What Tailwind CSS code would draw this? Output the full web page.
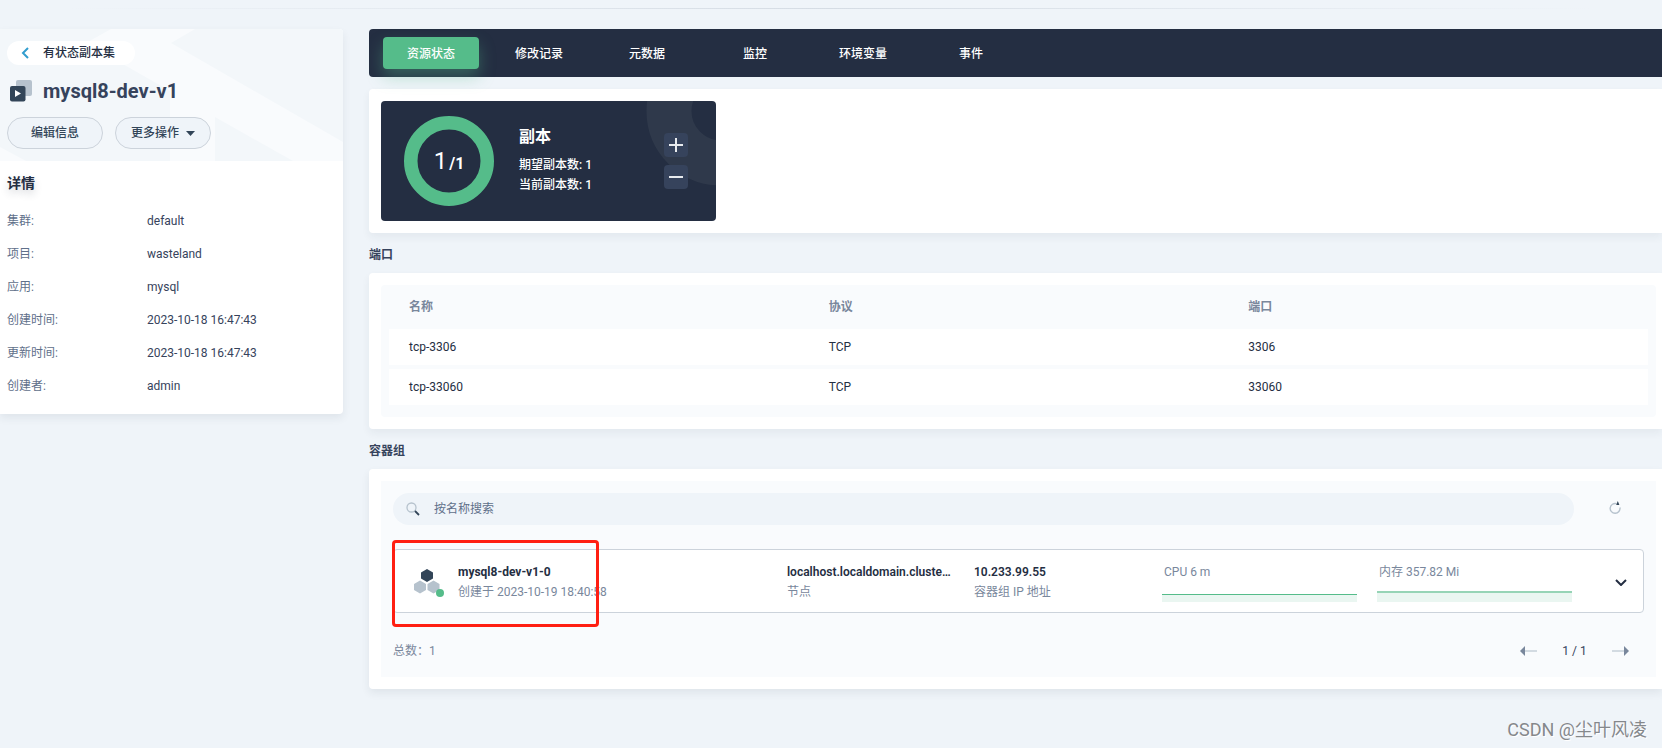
<!DOCTYPE html>
<html lang="zh-CN">
<head>
<meta charset="utf-8">
<meta name="viewport" content="width=device-width, initial-scale=1">
<title>mysql8-dev-v1</title>
<script src="https://cdn.jsdelivr.net/npm/@tailwindcss/browser@4"></script>
</head>
<body class="relative min-h-screen overflow-x-hidden bg-[#eff4f9] font-[Roboto,'Noto_Sans_CJK_SC',sans-serif] text-xs leading-5 text-[#36435c]">
  <div class="absolute inset-x-0 top-2 mx-auto h-px w-11/12 bg-linear-to-r from-transparent via-[#d5dce4] to-transparent"></div>

  <div class="flex items-start pt-[29px]">
    <!-- Sidebar -->
    <aside class="mr-[26px] w-[343px] shrink-0 overflow-hidden rounded-r bg-white shadow-[0_4px_8px_rgba(36,46,66,0.08)]">
      <header class="relative bg-[#f9fbfd] px-[7px] pt-3 pb-3">
        <svg class="absolute inset-0 h-full w-full" viewBox="0 0 343 132" preserveAspectRatio="none" fill="#f3f7fa" aria-hidden="true">
          <path d="M195 0 171 14 343 113V0Z"/>
          <path d="M0 0H111L86 14 170 62V132H26L0 118Z"/>
          <path d="M215 88 293 132H215Z"/>
        </svg>
        <div class="relative">
          <a href="#" class="flex h-6 w-32 items-center rounded-full bg-white pl-3 font-medium text-[#242e42]">
            <svg class="mr-2 size-4" viewBox="0 0 16 16" fill="none" stroke="#329dce" stroke-width="2" aria-hidden="true"><path d="M9 3 4 8l5 5"/></svg>
            有状态副本集
          </a>
          <h1 class="mt-3 flex h-7 items-center pl-[3px] text-xl font-bold">
            <svg class="mr-[11px] size-[22px]" viewBox="0 0 22 22" aria-hidden="true">
              <rect x="6" y="0" width="16" height="16" rx="2" fill="#b6c2cd"/>
              <rect x="0" y="6" width="15.500" height="15.500" rx="2" fill="#324558"/>
              <path d="M5 10v7l6-3.500z" fill="#fff"/>
            </svg>
            <span class="leading-7">mysql8-dev-v1</span>
          </h1>
          <div class="mt-3 flex gap-3">
            <button type="button" class="h-8 w-24 rounded-full border border-[#ccd3db] bg-[#eff4f9] font-medium text-[#324558]">编辑信息</button>
            <button type="button" class="flex h-8 w-24 items-center justify-center gap-[7px] rounded-full border border-[#ccd3db] bg-[#eff4f9] font-medium text-[#324558]">更多操作
              <svg class="h-[5px] w-[9px]" viewBox="0 0 9 5" fill="#324558" aria-hidden="true"><path d="M0 0h9L4.500 5z"/></svg>
            </button>
          </div>
        </div>
      </header>
      <section class="px-[7px] pt-3 pb-3">
        <h2 class="text-sm font-semibold text-[#242e42] text-shadow-[0_4px_8px_rgba(36,46,66,0.2)]">详情</h2>
        <dl class="mt-[11px] grid grid-cols-[140px_1fr] auto-rows-[33px] items-center">
          <dt class="text-[#5f708a]">集群:</dt><dd>default</dd>
          <dt class="text-[#5f708a]">项目:</dt><dd>wasteland</dd>
          <dt class="text-[#5f708a]">应用:</dt><dd>mysql</dd>
          <dt class="text-[#5f708a]">创建时间:</dt><dd>2023-10-18 16:47:43</dd>
          <dt class="text-[#5f708a]">更新时间:</dt><dd>2023-10-18 16:47:43</dd>
          <dt class="text-[#5f708a]">创建者:</dt><dd>admin</dd>
        </dl>
      </section>
    </aside>

    <!-- Main column -->
    <main class="min-w-0 flex-1">
      <nav class="flex h-12 items-center gap-3 rounded-l bg-[#242e42] pl-[14px] font-medium text-white">
        <a href="#" class="flex h-8 w-24 items-center justify-center rounded bg-[#55bc8a] pt-[2px] shadow-[0_8px_16px_rgba(85,188,138,0.36)]">资源状态</a>
        <a href="#" class="flex h-8 w-24 items-center justify-center pt-[2px]">修改记录</a>
        <a href="#" class="flex h-8 w-24 items-center justify-center pt-[2px]">元数据</a>
        <a href="#" class="flex h-8 w-24 items-center justify-center pt-[2px]">监控</a>
        <a href="#" class="flex h-8 w-24 items-center justify-center pt-[2px]">环境变量</a>
        <a href="#" class="flex h-8 w-24 items-center justify-center pt-[2px]">事件</a>
      </nav>

      <!-- Replicas -->
      <section class="mt-3 rounded-l bg-white p-3 pr-[6px] shadow-[0_4px_8px_rgba(36,46,66,0.06)]">
        <div class="relative flex h-[120px] w-[335px] items-center overflow-hidden rounded bg-[#242e42] pr-7 pl-[23px] text-white">
          <svg class="absolute top-0 right-0 h-[90px] w-[72px]" viewBox="0 0 72 90" aria-hidden="true">
            <circle cx="77" cy="10" r="52" fill="none" stroke="#2f394b" stroke-width="45"/>
          </svg>
          <div class="relative flex size-[90px] items-center justify-center">
            <svg class="absolute inset-0 size-full" viewBox="0 0 90 90" fill="none" aria-hidden="true"><circle cx="45" cy="45" r="38.250" stroke="#55bc8a" stroke-width="13.500"/></svg>
            <p class="relative flex items-baseline gap-[2px] leading-8"><span class="text-2xl">1</span><span class="text-base font-bold">/1</span></p>
          </div>
          <div class="relative ml-[25px] flex-1 pb-[5px]">
            <h3 class="mb-1 text-base leading-7 font-semibold">副本</h3>
            <p class="font-medium">期望副本数: 1</p>
            <p class="font-medium">当前副本数: 1</p>
          </div>
          <div class="relative flex flex-col gap-2">
            <button type="button" aria-label="增加副本" class="flex size-6 items-center justify-center rounded bg-[#36435c]">
              <svg class="size-[14px]" viewBox="0 0 14 14" stroke="#e8ebef" stroke-width="2" aria-hidden="true"><path d="M7 0v14M0 7h14"/></svg>
            </button>
            <button type="button" aria-label="减少副本" class="flex size-6 items-center justify-center rounded bg-[#36435c]">
              <svg class="size-[14px]" viewBox="0 0 14 14" stroke="#e8ebef" stroke-width="2" aria-hidden="true"><path d="M0 7h14"/></svg>
            </button>
          </div>
        </div>
      </section>

      <!-- Ports -->
      <h2 class="mt-3 mb-2 font-bold">端口</h2>
      <section class="rounded-l bg-white p-3 pr-[6px] shadow-[0_4px_8px_rgba(36,46,66,0.06)]">
        <div class="rounded bg-[#f9fbfd] px-2 pb-2">
          <table class="w-full table-fixed border-separate border-spacing-x-0 border-spacing-y-1 text-left text-[#242e42]">
            <thead><tr class="h-9 text-[#79879c]"><th class="px-5 font-bold">名称</th><th class="px-5 font-bold">协议</th><th class="px-5 font-bold">端口</th></tr></thead>
            <tbody>
              <tr class="h-9 bg-white"><td class="px-5">tcp-3306</td><td class="px-5">TCP</td><td class="px-5">3306</td></tr>
              <tr class="h-9 bg-white"><td class="px-5">tcp-33060</td><td class="px-5">TCP</td><td class="px-5">33060</td></tr>
            </tbody>
          </table>
        </div>
      </section>

      <!-- Pods -->
      <h2 class="mt-3 mb-2 font-bold">容器组</h2>
      <section class="rounded-l bg-white p-3 pr-[6px] shadow-[0_4px_8px_rgba(36,46,66,0.08)]">
        <div class="bg-[#f9fbfd] p-3">
          <div class="flex gap-3">
            <label class="flex h-8 flex-1 items-center rounded-full bg-[#eff4f9] pl-3">
              <svg class="mr-[13px] size-4" viewBox="0 0 16 16" fill="none" aria-hidden="true">
                <circle cx="6.500" cy="6.500" r="4.500" stroke="#b6c2cd" stroke-width="1.300"/>
                <path d="m10 10 4 4" stroke="#324558" stroke-width="1.800"/>
              </svg>
              <input type="text" aria-label="按名称搜索" placeholder="按名称搜索" class="h-8 flex-1 bg-transparent outline-none placeholder:text-[#5f708a]">
            </label>
            <button type="button" aria-label="刷新" class="flex h-8 w-[58px] items-center justify-center">
              <svg class="size-4" viewBox="0 0 16 16" fill="none" aria-hidden="true">
                <path d="M12.900 6.500A4.900 4.900 0 1 1 9.500 2.700" stroke="#b6c2cd" stroke-width="1.400"/>
                <path d="M10.800 0 12.400 4H9.200z" fill="#324558"/>
              </svg>
            </button>
          </div>

          <div class="relative mt-6 flex h-16 items-center gap-5 rounded border border-[#ccd3db] bg-white pt-[2px] pl-4">
            <div class="flex min-w-0 flex-1 items-center gap-[14px]">
              <svg class="h-8 w-[34px] shrink-0" viewBox="0 0 34 32" aria-hidden="true">
                <path d="m17 3 6 3.400v6.200L17 16l-6-3.400V6.400z" fill="#324558"/>
                <path d="m10 14.500 6 3.400v6.200l-6 3.400-6-3.400v-6.200zM23.500 14.500l6 3.400v6.200l-6 3.400-6-3.400v-6.200z" fill="#b6c2cd"/>
                <circle cx="30" cy="27" r="4" fill="#55bc8a"/>
              </svg>
              <div>
                <p class="font-bold text-[#242e42]">mysql8-dev-v1-0</p>
                <p class="text-[#79879c]">创建于 2023-10-19 18:40:58</p>
              </div>
            </div>
            <div class="w-[167px]">
              <p class="font-semibold whitespace-nowrap text-[#242e42]">localhost.localdomain.cluste…</p>
              <p class="text-[#79879c]">节点</p>
            </div>
            <div class="w-[168px]">
              <p class="font-semibold text-[#242e42]">10.233.99.55</p>
              <p class="text-[#79879c]">容器组 IP 地址</p>
            </div>
            <div class="w-[195px]">
              <p class="pl-[2px] text-[#79879c]">CPU 6 m</p>
              <div class="flex h-5 flex-col justify-end"><div class="h-2 border-t border-[#55bc8a] bg-[#eaf6f1]"></div></div>
            </div>
            <div class="w-[195px]">
              <p class="pl-[2px] text-[#79879c]">内存 357.82 Mi</p>
              <div class="flex h-5 flex-col justify-end"><div class="h-[11px] border-t-2 border-[#96d4b6] bg-[#eaf6f1]"></div></div>
            </div>
            <button type="button" aria-label="展开" class="mr-[10px] ml-[-4px] flex h-6 w-[45px] items-center justify-end pr-[6px]">
              <svg class="h-[7px] w-3" viewBox="0 0 12 7" fill="none" stroke="#242e42" stroke-width="2" aria-hidden="true"><path d="m1 1 5 5 5-5"/></svg>
            </button>
            <!-- Highlight frame over the pod name -->
            <div class="pointer-events-none absolute -top-[10px] -left-[2px] h-[87px] w-[207px] rounded border-3 border-[#ff1f12]"></div>
          </div>

          <div class="mt-6 flex h-7 items-center justify-between">
            <p class="text-[#79879c]">总数：1</p>
            <div class="flex items-center pr-[15px]">
              <button type="button" aria-label="上一页"><svg class="h-[10px] w-[17px]" viewBox="0 0 17 10" aria-hidden="true"><path d="M4 4h13v2H4z" fill="#d3dbe2"/><path d="M0 5 5 0v10z" fill="#79879c"/></svg></button>
              <span class="w-[75px] text-center">1 / 1</span>
              <button type="button" aria-label="下一页"><svg class="h-[10px] w-[17px]" viewBox="0 0 17 10" aria-hidden="true"><path d="M0 4h13v2H0z" fill="#d3dbe2"/><path d="m17 5-5-5v10z" fill="#79879c"/></svg></button>
            </div>
          </div>
        </div>
      </section>
    </main>
  </div>
  <p class="absolute right-[15px] bottom-[6px] text-lg leading-6 text-[#85888c] text-shadow-[1px_1px_0_#ffffff]">CSDN @尘叶风凌</p>
</body>
</html>
